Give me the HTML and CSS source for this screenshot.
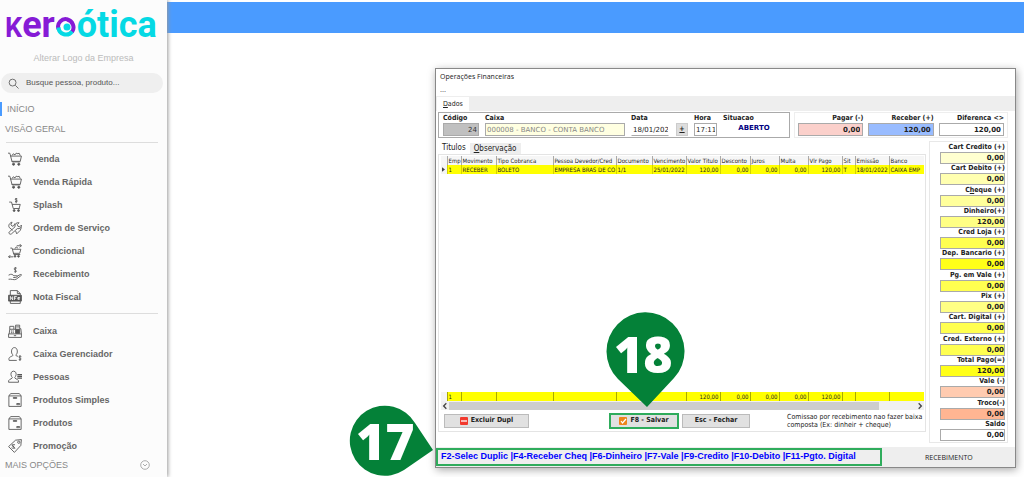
FILE: index.html
```html
<!DOCTYPE html>
<html lang="pt-BR">
<head>
<meta charset="utf-8">
<title>Kero Ótica - Operações Financeiras</title>
<link rel="stylesheet" href="styles.css">
</head>
<body>
<svg class="defs" aria-hidden="true">
  <symbol id="cart" viewBox="0 0 24 24"><path d="M0 2h3l1 3 3 12h14M4 7h19l-2 9H6.500M7 6l2-3 3 2 2-3 3 1 2-1 2 4"/><circle class="solid" cx="9.500" cy="21" r="1.800"/><circle class="solid" cx="18.500" cy="21" r="1.800"/></symbol>
  <symbol id="splash" viewBox="0 0 24 24"><path d="M2 7h4l3 11h11M7 11h14l-2 7M16 1.500c-4-2-5 1.500-2 2s3 4-2 2.500M14 0v9"/><circle class="solid" cx="10.500" cy="21.500" r="1.600"/><circle class="solid" cx="18" cy="21.500" r="1.600"/></symbol>
  <symbol id="tools" viewBox="0 0 24 24"><path d="M2 19 12 10c-1-5 3-8 7-7l-3 3 1 3 3 1 3-3c1 4-3 7-7 6L6 22c-2 2-6-1-4-3ZM8 16 2 11c-2-4 1-8 5-9L5 6l2 3 3-1 2-4M13 17l2 5 6-6 2-5"/></symbol>
  <symbol id="cartswap" viewBox="0 0 24 24"><path d="M4 7h3l3 11h11M8 9h14l-2 7H9.500M12 8l2-3 3 2M15 3h8m-3-3 3 3-3 3M9 22H1m3-3-3 3 3 2"/><circle class="solid" cx="12" cy="21" r="1.500"/><circle class="solid" cx="18" cy="21" r="1.500"/></symbol>
  <symbol id="hand" viewBox="0 0 24 24"><path d="M15 2c-4-2-6 2-3 3s4 4-1 3M12.500 0v10M1 14c5-3 7-1 9 1h5c2 1 0 3-2 3H9M15 16l6-3c2-1 3 1 1 2l-8 6c-4 2-8-1-13 0"/></symbol>
  <symbol id="nfe" viewBox="0 0 24 24"><path d="M4 9V1h12l5 5v3M4 19v4h17v-4M16 1v5h5"/><path class="solid" d="M1 9h22v10H1z"/><path class="light" d="M4 17v-6l4 6v-6M11 17v-6h4m-4 3h3M20 16h-3v-3h3v1h-3"/></symbol>
  <symbol id="register" viewBox="0 0 24 24"><path d="M1 17h22v6H1zM2 17l1-8h10v-7h7v6h2l1 9M3 9V4h7v5M14 5h5M10 20h4"/><path d="M5 12h2m1 0h2m-5 3h2m1 0h2" stroke-width="2"/><path class="solid" d="M13 9h7v7h-7z"/></symbol>
  <symbol id="manager" viewBox="0 0 24 24"><path d="M15 23H2c-2-6 3-6 6-8 1-1 0-2-1-3-2-4-1-11 4-11s6 7 4 11c-1 1-2 2-1 3l3 1"/><path d="M23 16.500c-4-2-6 1-3 2s4 4-1.500 3M20.500 14v10"/></symbol>
  <symbol id="people" viewBox="0 0 24 24"><path d="M1 21c-1-5 4-5 6-7 1-1 0-2-1-3-2-4-1-9 3.500-9s5.500 5 3.500 9c-1 1-2 2-1 3 2 2 7 2 6 7z"/><path d="M16 8h8m-8 3h8m-8 3h8" stroke-width="2"/></symbol>
  <symbol id="box" viewBox="0 0 24 24"><path d="M1.500 5h21v18h-21zM1.500 5l3-4h15l3 4M15 20v-2h5v2z"/><path class="solid" d="M9 8h6v1H9z"/></symbol>
  <symbol id="tag" viewBox="0 0 24 24"><path d="M1 13 13 2l10-1-1 10-11 12zM12 10c-5-2-6 3-3 3s2 5-3 2M7 9l5 8"/><circle cx="18.500" cy="5.500" r="2"/></symbol>
</svg>

<aside class="sidebar">
  <div class="logo" role="img" aria-label="Kero Ótica">
    <span class="logo-k">K</span><span class="logo-purple">er</span>
    <svg class="logo-eye" viewBox="0 0 22 20"><path d="M13 2.500A7.500 7.500 0 0 0 3.500 12M12 2.500A8 8 0 0 1 17 15" fill="none" stroke="#861bd6" stroke-width="4"/><path d="M3.500 10.500A7.500 7.500 0 0 0 17 14.500" fill="none" stroke="#05d9e4" stroke-width="4"/><circle cx="12" cy="10" r="3.500" fill="#05d9e4"/></svg>
    <span class="logo-cyan">ótica</span>
  </div>
  <a class="change-logo" href="#">Alterar Logo da Empresa</a>
  <label class="search"><svg viewBox="0 0 24 24"><circle cx="10" cy="10" r="7.500"/><path d="m16 16 7 7"/></svg><input type="text" aria-label="Busca" placeholder="Busque pessoa, produto..."></label>
  <nav>
    <a class="section active" href="#">INÍCIO</a>
    <a class="section" href="#">VISÃO GERAL</a>
    <div class="group">
      <a href="#"><svg><use href="#cart"/></svg>Venda</a>
      <a href="#"><svg><use href="#cart"/></svg>Venda Rápida</a>
      <a href="#"><svg><use href="#splash"/></svg>Splash</a>
      <a href="#"><svg><use href="#tools"/></svg>Ordem de Serviço</a>
      <a href="#"><svg><use href="#cartswap"/></svg>Condicional</a>
      <a href="#"><svg><use href="#hand"/></svg>Recebimento</a>
      <a href="#"><svg><use href="#nfe"/></svg>Nota Fiscal</a>
    </div>
    <div class="group">
      <a href="#"><svg><use href="#register"/></svg>Caixa</a>
      <a href="#"><svg><use href="#manager"/></svg>Caixa Gerenciador</a>
      <a href="#"><svg><use href="#people"/></svg>Pessoas</a>
      <a href="#"><svg><use href="#box"/></svg>Produtos Simples</a>
      <a href="#"><svg><use href="#box"/></svg>Produtos</a>
      <a href="#"><svg><use href="#tag"/></svg>Promoção</a>
    </div>
    <a class="more" href="#">MAIS OPÇÕES<svg viewBox="0 0 10 10"><circle cx="5" cy="5" r="4.300"/><path d="m3 4 2 2 2-2"/></svg></a>
  </nav>
</aside>

<main class="desktop">
  <div class="topbar"></div>
  <section class="window">
    <header class="title">Operações Financeiras</header>
    <div class="menu">...</div>
    <div class="tabstrip"><button class="tab"><u>D</u>ados</button></div>
    <div class="content">
      <div class="summary">
        <div class="box ident">
          <label class="f-code">Código<input class="gray num" value="24" readonly></label>
          <label class="f-caixa">Caixa<input class="cream" value="000008 - BANCO - CONTA BANCO" readonly></label>
          <div class="f-data"><label for="data">Data</label><div class="date"><input id="data" value="18/01/2022"><button aria-label="Calendário"><u>+</u></button></div></div>
          <label class="f-hora">Hora<input value="17:11"></label>
          <div class="f-sit">Situacao<strong>ABERTO</strong></div>
        </div>
        <div class="totals">
          <label>Pagar (-)<input class="pink" value="0,00"></label>
          <label>Receber (+)<input class="blue" value="120,00"></label>
          <label>Diferenca &lt;&gt;<input value="120,00"></label>
        </div>
      </div>
      <div class="body">
        <div class="left">
          <div class="subtabs"><button class="on">Titulos</button><button><u>O</u>bservação</button></div>
          <div class="panel">
            <div class="gridwrap">
              <table>
                <colgroup><col class="c0"><col class="c1"><col class="c2"><col class="c3"><col class="c4"><col class="c5"><col class="c6"><col class="c6"><col class="c7"><col class="c8"><col class="c8"><col class="c6"><col class="c9"><col class="c6"><col></colgroup>
                <thead><tr><th></th><th>Emp</th><th>Movimento</th><th>Tipo Cobranca</th><th>Pessoa Devedor/Cred</th><th>Documento</th><th>Vencimento</th><th>Valor Titulo</th><th>Desconto</th><th>Juros</th><th>Multa</th><th>Vlr Pago</th><th>Sit</th><th>Emissão</th><th>Banco</th></tr></thead>
                <tbody>
                  <tr class="hl"><td class="mark"><svg viewBox="0 0 4 6"><path d="M0 0l4 3-4 3z"/></svg></td><td>1</td><td>RECEBER</td><td>BOLETO</td><td>EMPRESA BRAS DE CO</td><td>1/1</td><td>25/01/2022</td><td class="r">120,00</td><td class="r">0,00</td><td class="r">0,00</td><td class="r">0,00</td><td class="r">120,00</td><td>T</td><td>18/01/2022</td><td>CAIXA EMP</td></tr>
                  <tr class="filler"><td colspan="15"></td></tr>
                </tbody>
                <tfoot><tr class="hl"><td class="mark"></td><td>1</td><td></td><td></td><td></td><td></td><td></td><td class="r">120,00</td><td class="r">0,00</td><td class="r">0,00</td><td class="r">0,00</td><td class="r">120,00</td><td></td><td></td><td></td></tr></tfoot>
              </table>
              <div class="scroll"><svg viewBox="0 0 6 6"><path d="M4 1 2 3l2 2"/></svg><span></span><svg viewBox="0 0 6 6"><path d="m2 1 2 2-2 2"/></svg></div>
            </div>
            <div class="actions">
              <button class="del"><svg viewBox="0 0 8 8"><rect width="8" height="8" rx="1" fill="#f23a2e"/><path d="M1 4h6" stroke="#fff" stroke-width="1.300"/></svg>Excluir Dupl</button>
              <button class="save"><svg viewBox="0 0 8 8"><rect width="8" height="8" rx="1" fill="#ee851b"/><path d="m2 4 1.500 2L7 2" fill="none" stroke="#fff" stroke-width="1.200"/></svg>F8 - Salvar</button>
              <button class="close">Esc - Fechar</button>
              <p>Comissao por recebimento nao fazer baixa composta (Ex: dinheir + cheque)</p>
            </div>
          </div>
        </div>
        <div class="payments">
          <label>Cart Credito (+)<input class="y1" value="0,00"></label>
          <label>Cart Debito (+)<input class="y2" value="0,00"></label>
          <label><span>C<u>h</u>eque (+)</span><input class="y3" value="0,00"></label>
          <label>Dinheiro(+)<input class="y4" value="120,00"></label>
          <label>Cred Loja (+)<input class="y5" value="0,00"></label>
          <label>Dep. Bancario (+)<input class="y6" value="0,00"></label>
          <label>Pg. em Vale (+)<input class="y5" value="0,00"></label>
          <label>Pix (+)<input class="y4" value="0,00"></label>
          <label>Cart. Digital (+)<input class="y5" value="0,00"></label>
          <label>Cred. Externo (+)<input class="y5" value="0,00"></label>
          <label>Total Pago(=)<input class="y6" value="120,00"></label>
          <label>Vale (-)<input class="o1" value="0,00"></label>
          <label>Troco(-)<input class="o2" value="0,00"></label>
          <label>Saldo<input value="0,00"></label>
        </div>
      </div>
    </div>
    <footer class="status"><div class="keys">F2-Selec Duplic |F4-Receber Cheq |F6-Dinheiro |F7-Vale |F9-Credito |F10-Debito |F11-Pgto. Digital</div><div class="mode">RECEBIMENTO</div></footer>
  </section>
  <div class="pin pin17"><svg viewBox="0 0 84 72"><path d="M66 18A35 35 0 1 0 55 65L84 45z"/></svg><b>17</b></div>
  <div class="pin pin18"><svg viewBox="0 0 80 96"><path d="M12 67A39 39 0 1 1 68 66L41 95z"/></svg><b>18</b></div>
</main>
</body>
</html>
```
FILE: styles.css
```css
* { box-sizing: border-box; }
body {
  margin: 0;
  min-height: 100vh;
  display: flex;
  background: #fff;
  color: #222;
  font: 7px/9px "DejaVu Sans Condensed", "DejaVu Sans", sans-serif;
}
a { color: inherit; text-decoration: none; }
input, button { font: inherit; color: inherit; margin: 0; border-radius: 0; }
.defs { position: absolute; width: 0; height: 0; }

/* Sidebar */
.sidebar {
  flex: 0 0 167px;
  background: #fcfcfc;
  box-shadow: 1px 0 4px #999;
  z-index: 1;
  font-family: "Liberation Sans", Arial, sans-serif;
  font-size: 9px;
  line-height: 12px;
  color: #666;
}
.logo {
  display: flex;
  align-items: baseline;
  height: 46px;
  padding: 5px 5px 0;
  font: 700 36px/40px Roboto, sans-serif;
  white-space: nowrap;
}
.logo-k { font-size: 27px; color: #861bd6; }
.logo-purple { color: #861bd6; }
.logo-cyan { color: #05d9e4; }
.logo-eye { width: 22px; height: 20px; flex: none; }
.change-logo { display: block; padding-top: 6px; text-align: center; color: #bbb; }
.search {
  display: flex;
  align-items: center;
  gap: 7px;
  height: 20px;
  margin: 9px 4px 0 1px;
  padding: 0 7px;
  border-radius: 10px;
  background: #efefef;
}
.search svg { width: 11px; height: 11px; fill: none; stroke: #666; stroke-width: 2; }
.search input { flex: 1; min-width: 0; padding: 0; border: 0; outline: 0; background: none; font-size: 8px; }
.search input::placeholder { color: #555; opacity: 1; }
.section { display: block; padding: 0 5px; color: #888; line-height: 14px; margin-top: 6px; }
.section.active { border-left: 2px solid #4a9bff; margin-top: 9px; }
.group { margin: 6px 9px 0 6px; padding-top: 4px; border-top: 1px solid #ddd; }
.group + .group { margin-top: 5px; padding-top: 5px; }
.group a { display: flex; align-items: center; gap: 11px; height: 23px; padding-left: 2px; font-weight: 700; }
.group svg { width: 14px; height: 14px; fill: none; stroke: #555; stroke-width: 1.5px; overflow: visible; }
.solid { fill: #555; }
.light { stroke: #fff; }
.more { display: flex; align-items: center; justify-content: space-between; padding: 2px 17px 0 5px; color: #888; }
.more svg { width: 10px; height: 10px; fill: none; stroke: #999; stroke-width: 0.8px; }

/* Desktop and floating window */
.desktop { flex: 1; position: relative; }
.topbar { height: 31px; margin-top: 2px; background: #4a9bff; }
.window {
  position: absolute;
  left: 268px;
  right: 8px;
  top: 68px;
  bottom: 9px;
  display: flex;
  flex-direction: column;
  border: 1px solid #888;
  background: #fff;
  box-shadow: 1px 2px 8px #aaa;
}
.title { padding: 3px 4px 0; font: 7px/10px "Open Sans", sans-serif; }
.menu { padding: 5px 4px 2px; line-height: 7px; }
.tabstrip { height: 15px; padding: 1px 1px 0; background: #eee; }
.tab { display: block; height: 14px; padding: 0 6px; border: 0; background: #fff; }
.content { flex: 1; min-height: 0; display: flex; flex-direction: column; padding: 1px 7px 4px 2px; }
.summary { display: flex; gap: 4px; height: 26px; font-weight: 700; }
.summary input { display: block; width: 100%; height: 13px; padding: 0 2px; border: 1px solid #aaa; background: #fff; }
.ident { flex: 1; display: flex; gap: 6px; padding: 1px 4px; border: 1px solid #aaa; }
.ident input { padding: 0 1px; font: 7px/10px "DejaVu Sans", sans-serif; }
.ident .gray { background: #c0c0c0; color: #333; text-align: right; }
.ident .cream { background: #ffffe1; color: #888; }
.f-code { width: 36px; }
.f-caixa { flex: 1; }
.f-data { width: 57px; }
.f-hora { width: 23px; }
.f-sit { width: 62px; display: flex; flex-direction: column; }
.f-sit strong { text-align: center; color: #000080; font: 700 7px/11px "DejaVu Sans", sans-serif; }
.date { display: flex; }
.ident .date input { width: 38px; padding-right: 0; border-color: #fff #fff #aaa #fff; }
.date button { width: 12px; height: 13px; margin-left: auto; padding: 0; border: 1px solid #ccc; background: #ddd; font-weight: 700; }
.totals { width: 214px; display: flex; gap: 5px; padding: 1px 3px; border: 1px solid #eee; text-align: right; }
.totals label { flex: 1; }
.totals input, .payments input { text-align: right; font: 700 7px/10px "DejaVu Sans", sans-serif; }
.summary .pink { background: #fbd0cb; }
.summary .blue { background: #99bcff; }
.body { flex: 1; min-height: 0; display: flex; gap: 3px; padding-top: 3px; }
.left { flex: 1; min-width: 0; display: flex; flex-direction: column; }
.subtabs { display: flex; align-items: flex-end; height: 13px; font-size: 8px; }
.subtabs button { height: 11px; padding: 0 4px; border: 0; background: #eee; line-height: 11px; }
.subtabs .on { height: 13px; background: #fff; }
.panel { flex: 1; min-height: 0; display: flex; flex-direction: column; border: 1px solid #e4e4e4; margin-bottom: 11px; }
.gridwrap { flex: 1; min-height: 0; display: flex; flex-direction: column; padding: 1px 1px 0 2px; }
table { flex: 1; width: 100%; height: 242px; table-layout: fixed; border-collapse: collapse; font-size: 6px; line-height: 9px; color: #222; }
th, td { height: 9px; padding: 0 1px; overflow: hidden; white-space: nowrap; text-align: left; font-weight: 400; border-left: 1px solid #ddd; }
th { background: #f6f6f6; border-color: #aaa; }
th:first-child, td:first-child { border-left: 0; }
.hl td { background: #ff0; border-color: #d3d300; }
tfoot .hl td { border-color: #aaaa00; }
.hl .mark { background: #f4f4f4; }
.mark svg { display: block; width: 3px; height: 5px; fill: #444; }
.hl .r, .r { text-align: right; }
.filler td { height: auto; }
.c0 { width: 6px; } .c1 { width: 14px; } .c2 { width: 35px; } .c3 { width: 57px; } .c4 { width: 63px; }
.c5 { width: 36px; } .c6 { width: 34px; } .c7 { width: 30px; } .c8 { width: 29px; } .c9 { width: 13px; }
.scroll { display: flex; align-items: center; justify-content: space-between; height: 9px; background: #f0f0f0; }
.scroll svg { width: 8px; height: 8px; fill: none; stroke: #444; }
.scroll span { width: 430px; height: 8px; margin-right: auto; background: #cdcdcd; }
.actions { display: flex; align-items: center; height: 21px; padding: 0 0 0 5px; }
.actions button {
  display: flex; align-items: center; justify-content: center; gap: 3px;
  height: 14px; padding: 0; border: 1px solid #bbb; background: #e1e1e1;
  font-weight: 700;
}
.actions svg { width: 8px; height: 8px; }
.actions .del { width: 85px; }
.actions .save { width: 70px; height: 16px; margin-left: auto; border: 2px solid #2fac5c; }
.actions .close { width: 68px; margin-left: 3px; }
.actions p { width: 138px; margin: 0 0 0 37px; line-height: 8px; }
.payments {
  width: 79px;
  display: flex;
  flex-direction: column;
  justify-content: space-between;
  padding: 1px 2px 1px 10px;
  border: 1px solid #e8e8e8;
  font-weight: 700;
}
.payments label { display: flex; flex-direction: column; align-items: flex-end; white-space: nowrap; }
.payments input { width: 100%; height: 12px; padding: 0; border: 1px solid #aaa; background: #fff; }
.payments .y1 { background: #ffffd0; }
.payments .y2 { background: #ffffb0; }
.payments .y3 { background: #ffff9c; }
.payments .y4 { background: #ffff84; }
.payments .y5 { background: #ffff50; }
.payments .y6 { background: #ffff18; }
.payments .o1 { background: #ffcbb0; }
.payments .o2 { background: #ffb592; }
.status { display: flex; align-items: center; height: 20px; background: #eee; }
.keys {
  flex: 0 0 446px;
  height: 18px;
  padding: 0 3px;
  border: 2px solid #2fac5c;
  color: #00f;
  font: 700 9px/13px "Liberation Sans", Arial, sans-serif;
  white-space: nowrap;
}
.mode { margin-left: auto; width: 90px; font: 7px/9px "Open Sans", sans-serif; }

/* Step markers over the window */
.pin { position: absolute; }
.pin svg { display: block; width: 100%; height: 100%; fill: #048138; }
.pin b { position: absolute; color: #fff; font: 800 50px/50px "Open Sans", sans-serif; }
.pin17 { left: 182px; top: 405px; width: 84px; height: 72px; }
.pin17 b { left: 7px; top: 11px; }
.pin18 { left: 439px; top: 312px; width: 80px; height: 96px; }
.pin18 b { left: 8px; top: 17px; }
```
